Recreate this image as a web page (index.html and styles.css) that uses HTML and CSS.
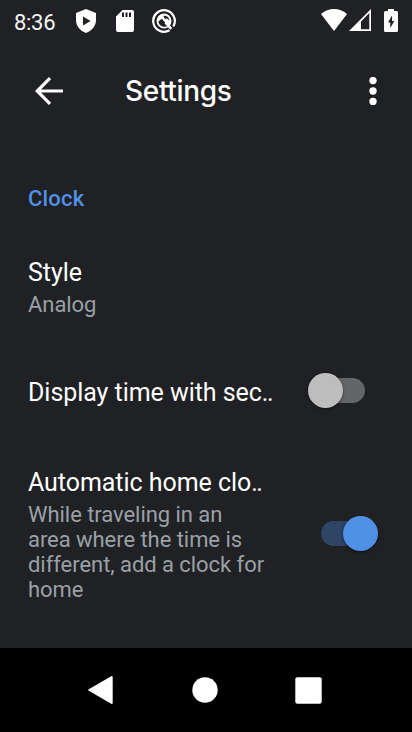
FILE: index.html
```html
<!DOCTYPE html>
<html lang="en">
<head>
<meta charset="utf-8">
<title>Settings</title>
<link rel="stylesheet" href="styles.css">
</head>
<body>
<div class="screen">
  <div class="status">
    <span class="time">8:36</span>
    <svg class="shield" width="20" height="24" viewBox="0 0 20 24"><path fill="#fff" fill-rule="evenodd" d="M10 0 20 3.900V11c0 6-4.200 10.800-10 13C4.200 21.800 0 17 0 11V3.900ZM7 7.500v9l7.600-4.500Z"/></svg>
    <svg class="sd" width="18" height="22" viewBox="0 0 18 22"><path fill="#fff" fill-rule="evenodd" d="M6.500 0H16a2 2 0 0 1 2 2v18a2 2 0 0 1-2 2H2a2 2 0 0 1-2-2V6.500ZM6 2.500v4.500h2V2.500ZM9.500 2.500v4.500h2V2.500ZM13 2.500v4.500h2V2.500Z"/></svg>
    <svg class="q" width="24" height="24" viewBox="0 0 24 24" fill="none" stroke="#fff"><path stroke-width="2.200" d="M17.500 21.300A10.800 10.800 0 1 1 21.300 17.500"/><path fill="#fff" fill-rule="evenodd" stroke="none" d="M12 4.500a7.500 7.500 0 1 0 0 15 7.500 7.500 0 1 0 0-15ZM6.300 12.500l3.500-2.800 6.400 7.300C12.500 19 7 17.300 6.300 12.500ZM11.500 7C14 6 17 8 17.500 11.500L14.500 9.200 13 10.300Z"/><path stroke-width="2.600" d="m13.500 13.500 5.800 6.300"/></svg>
    <span class="grow"></span>
    <svg class="wifi" width="26" height="22" viewBox="0 0 26 22"><path fill="#fff" d="M0 5C7.500-1.600 18.500-1.600 26 5L13 22Z"/></svg>
    <svg class="cell" width="22" height="22" viewBox="0 0 22 22"><path fill="#fff" fill-rule="evenodd" d="M22 0v22H0ZM20.300 4 12 12.500v7.800h8.300Z"/></svg>
    <svg class="battery" width="14" height="23" viewBox="0 0 14 23"><path fill="#fff" fill-rule="evenodd" d="M4 0h6v2h2.500A1.500 1.500 0 0 1 14 3.500v18a1.500 1.500 0 0 1-1.500 1.500h-11A1.500 1.500 0 0 1 0 21.500v-18A1.500 1.500 0 0 1 1.500 2H4ZM8 6.500l-4 7h2.300v5.500l4-7H8Z"/></svg>
  </div>
  <div class="appbar">
    <svg class="back" width="28" height="28" viewBox="0 0 28 28" fill="none" stroke="#fff" stroke-width="3.200"><path d="M28 14H3M15 1.200 2.200 14 15 26.800"/></svg>
    <h1>Se<span class="joined">t</span>tings</h1>
    <svg width="8" height="28" viewBox="0 0 8 28" fill="#fff"><circle cx="4" cy="3.500" r="3.700"/><circle cx="4" cy="14" r="3.700"/><circle cx="4" cy="24.500" r="3.700"/></svg>
  </div>
  <main>
    <h2>Clock</h2>
    <section class="item style">
      <div class="title">Style</div>
      <div class="summary">Analog</div>
    </section>
    <section class="item row seconds">
      <div class="title">Display time with sec<span class="dots">..</span></div>
      <span class="switch"><span class="thumb"></span></span>
    </section>
    <section class="item row home">
      <div>
        <div class="title">Automatic home clo<span class="dots">..</span></div>
        <div class="summary">While traveling in an<br>area where the time is<br>different, add a clock for<br>home</div>
      </div>
      <span class="switch on"><span class="thumb"></span></span>
    </section>
  </main>
  <nav>
    <svg width="25" height="30" viewBox="0 0 25 30"><path fill="#fff" stroke="#fff" stroke-width="2" stroke-linejoin="round" d="M1.300 15 23.700 2v26Z"/></svg>
    <svg class="dot" width="26" height="26" viewBox="0 0 26 26"><circle cx="13" cy="13" r="12.700" fill="#fff"/></svg>
    <svg width="27" height="27" viewBox="0 0 27 27"><rect x=".3" y=".3" width="26.400" height="26.400" rx="2" fill="#fff"/></svg>
  </nav>
</div>
</body>
</html>
```
FILE: styles.css
```css
* { box-sizing: border-box; }
body { margin: 0; background: #202124; font-family: Roboto, sans-serif; color: #fff; }
svg { display: block; flex: none; }
.screen { width: 412px; height: 732px; display: flex; flex-direction: column; overflow: hidden; }
.status { height: 42px; display: flex; align-items: flex-start; padding: 9px 14px 0; }
.time { width: 62px; padding-top: 1px; font-size: 22px; line-height: 26px; letter-spacing: -0.3px; color: #f4f4f4; }
.sd { margin: 1px 0 0 20px; }
.q { margin-left: 18px; }
.grow { flex: 1; }
.wifi { margin-right: 2px; }
.cell { margin-right: 13px; }
.appbar { height: 98px; display: flex; align-items: center; padding: 0 35px; }
h1 { flex: 1; margin: 0 0 0 62px; font-family: Inter, Roboto, sans-serif; font-size: 28px; font-weight: 500; line-height: 36px; letter-spacing: -0.3px; }
.joined { letter-spacing: -1.2px; }
main { flex: 1; padding: 44px 28px 0; }
h2 { margin: 0; font-size: 22px; line-height: 30px; font-weight: 500; letter-spacing: 0.2px; color: #4e91e5; }
.title { font-size: 25px; line-height: 30px; white-space: nowrap; letter-spacing: -0.05px; }
.dots { letter-spacing: -1.4px; }
.summary { font-size: 22px; line-height: 25px; letter-spacing: -0.05px; color: #9aa0a6; }
.style { margin-top: 44px; }
.style .summary { margin-top: 4px; }
.row { display: flex; justify-content: space-between; }
.seconds { margin-top: 61px; align-items: center; }
.home { margin-top: 60px; }
.home .summary { margin-top: 4px; }
.switch { width: 44px; height: 25px; border-radius: 13px; background: #646567; margin-right: 19px; display: flex; align-items: center; }
.seconds .switch { margin-top: -5px; }
.thumb { width: 35px; height: 35px; flex: none; border-radius: 50%; background: #bdbdbd; box-shadow: 0 1px 3px #0008; margin-left: -13px; }
.on { background: #2e4566; align-self: center; margin-top: -4px; }
.on .thumb { background: #4e91e5; margin-left: 22px; }
nav { height: 84px; flex: none; background: #000; display: flex; align-items: center; justify-content: space-between; padding: 0 90px 0 88px; }
.dot { margin: 0 -1px 0 1px; }
```
